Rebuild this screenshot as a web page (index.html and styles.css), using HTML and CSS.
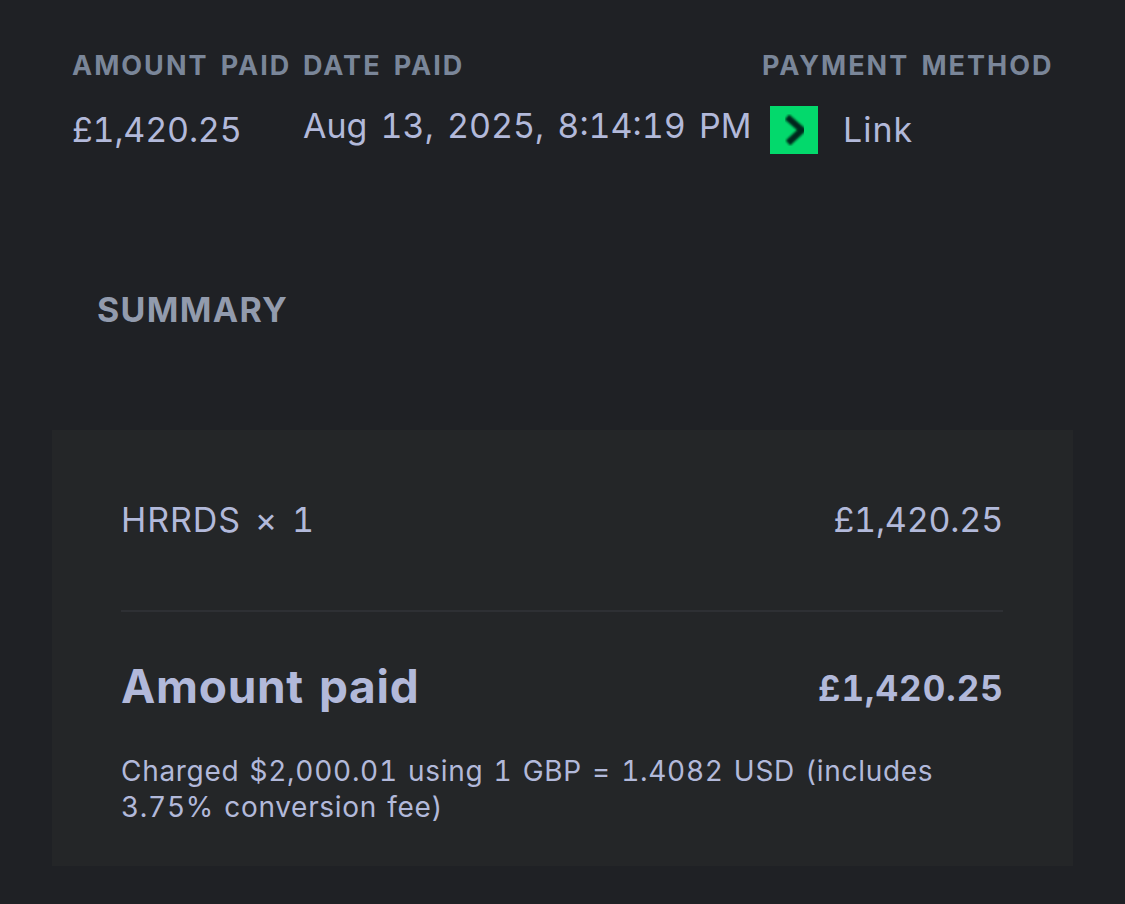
FILE: index.html
```html
<!DOCTYPE html>
<html lang="en">
<head>
<meta charset="utf-8">
<title>Receipt</title>
<link rel="stylesheet" href="styles.css">
</head>
<body>
<main class="page">
  <section class="meta">
    <div class="col col-amount">
      <div class="label">AMOUNT PAID</div>
      <div class="value price">£1,420.25</div>
    </div>
    <div class="col col-date">
      <div class="label">DATE PAID</div>
      <div class="value">Aug 13, 2025, 8:14:19 PM</div>
    </div>
    <div class="col col-method">
      <div class="label">PAYMENT METHOD</div>
      <div class="method">
        <svg class="link-icon" width="48" height="48" viewBox="0 0 48 48" aria-hidden="true">
          <defs><filter id="soft"><feGaussianBlur stdDeviation="0.8"/></filter></defs>
          <rect width="48" height="48" fill="#03d96c"/>
          <path d="M17 11 L32 24 L18 37" fill="none" stroke="#04261a" stroke-width="6.5" filter="url(#soft)"/>
        </svg>
        <span class="value link-name">Link</span>
      </div>
    </div>
  </section>
  <h2 class="summary-title">SUMMARY</h2>
  <section class="card">
    <div class="row line">
      <span class="line-name">HRRDS × 1</span>
      <span class="price">£1,420.25</span>
    </div>
    <div class="row total">
      <span class="total-label">Amount paid</span>
      <span class="total-value">£1,420.25</span>
    </div>
    <p class="note">Charged $2,000.01 using 1 GBP = 1.4082 USD (includes 3.75% conversion fee)</p>
  </section>
</main>
</body>
</html>
```
FILE: styles.css
```css
* { box-sizing: border-box; }
html, body { margin: 0; padding: 0; }
body {
  width: 1125px;
  height: 904px;
  overflow: hidden;
  background: #1f2125;
  font-family: Inter, "Liberation Sans", sans-serif;
  font-variant-numeric: tabular-nums;
  color: #b2b9da;
}
.page { padding: 50px 52px 0; }
.meta { display: flex; padding-left: 20px; }
.col-amount { width: 231px; }
.col-date { width: 459px; }
.label {
  font-size: 27px;
  line-height: 32px;
  font-weight: 700;
  letter-spacing: 2px;
  word-spacing: 3px;
  color: #7a8699;
  white-space: nowrap;
}
.value {
  font-size: 34px;
  line-height: 42px;
  word-spacing: 4px;
  white-space: nowrap;
}
.price { letter-spacing: -0.2px; }
.link-name { letter-spacing: 1px; }
.col-amount .value { margin-top: 27px; }
.col-date .value { margin-top: 23px; }
.method { display: flex; align-items: center; gap: 25px; margin-top: 24px; margin-left: 8px; }
.summary-title {
  margin: 136px 0 0 45px;
  font-size: 34px;
  line-height: 40px;
  font-weight: 700;
  letter-spacing: 1.3px;
  color: #929bad;
}
.card {
  margin-top: 100px;
  width: 1021px;
  height: 436px;
  background: #242628;
  padding: 68px 70px 0 69px;
}
.row { display: flex; justify-content: space-between; align-items: flex-start; }
.line {
  font-size: 34px;
  line-height: 44px;
  padding-bottom: 68px;
  border-bottom: 2px solid #2e3034;
}
.line-name { letter-spacing: 0.9px; word-spacing: 4px; }
.total { margin-top: 46px; }
.total-label { font-size: 46px; line-height: 56px; font-weight: 700; letter-spacing: 0.7px; word-spacing: 2px; }
.total-value { font-size: 35px; line-height: 60px; font-weight: 700; letter-spacing: 1px; margin-right: -1px; }
.note {
  margin: 35px 0 0;
  font-size: 28px;
  line-height: 36px;
  letter-spacing: 0.7px;
  word-spacing: 2px;
}
```
